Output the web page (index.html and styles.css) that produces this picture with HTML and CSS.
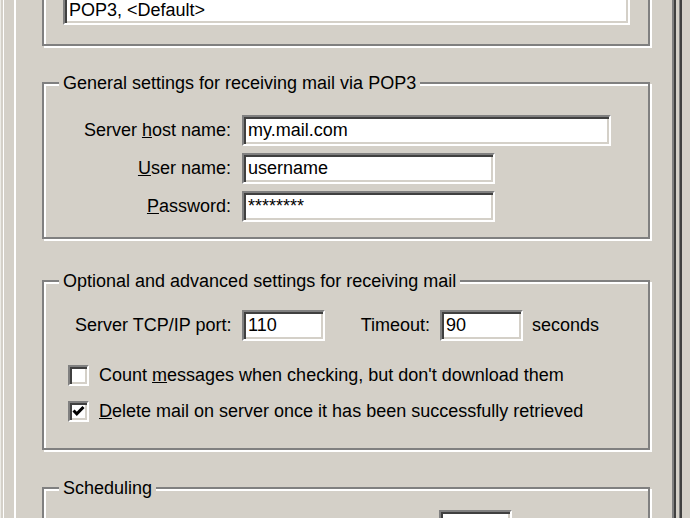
FILE: index.html
```html
<!DOCTYPE html>
<html lang="en">
<head>
    <meta charset="UTF-8">
    <title>Account Properties - Receiving</title>
    <link rel="stylesheet" href="styles.css">
</head>
<body>
    <div class="window">
        <div class="sheet">
            <div class="tab-page">

                <!-- Account list (top of group scrolled out of view) -->
                <div class="group group-first">
                    <div class="listbox">
                        <div class="list-item">POP3, &lt;Default&gt;</div>
                    </div>
                </div>

                <!-- General settings -->
                <div class="group group-general">
                    <div class="group-title">General settings for receiving mail via POP3</div>
                    <div class="form-grid">
                        <label class="form-label">Server <u>h</u>ost name:</label>
                        <input class="field field-wide" type="text" value="my.mail.com">
                        <label class="form-label"><u>U</u>ser name:</label>
                        <input class="field field-mid" type="text" value="username">
                        <label class="form-label"><u>P</u>assword:</label>
                        <input class="field field-mid" type="text" value="********">
                    </div>
                </div>

                <!-- Optional settings -->
                <div class="group group-optional">
                    <div class="group-title">Optional and advanced settings for receiving mail</div>
                    <div class="port-row">
                        <label class="port-label">Server TCP/IP port:</label>
                        <input class="field field-short" type="text" value="110">
                        <label class="timeout-label">Timeout:</label>
                        <input class="field field-short" type="text" value="90">
                        <span class="unit">seconds</span>
                    </div>
                    <div class="check-row check-first">
                        <span class="checkbox"></span>
                        <span>Count <u>m</u>essages when checking, but don't download them</span>
                    </div>
                    <div class="check-row">
                        <span class="checkbox">
                            <svg width="13" height="13" viewBox="0 0 13 13">
                                <path d="M1.5 5.5 L4.8 8.8 L11.5 2" fill="none" stroke="#000" stroke-width="3"/>
                            </svg>
                        </span>
                        <span><u>D</u>elete mail on server once it has been successfully retrieved</span>
                    </div>
                </div>

                <!-- Scheduling -->
                <div class="group group-schedule">
                    <div class="group-title">Scheduling</div>
                    <div class="schedule-row">
                        <label class="schedule-label">Check for new messages every</label>
                        <input class="field field-small" type="text" value="">
                        <span class="unit">minutes</span>
                    </div>
                </div>

            </div>
        </div>
    </div>
</body>
</html>
```
FILE: styles.css
```css
* {
    margin: 0;
    padding: 0;
    box-sizing: border-box;
}

:root {
    --face: #d4d0c8;
    --shadow: #808080;
    --dark: #404040;
    --light: #ffffff;
}

body {
    background-color: var(--face);
    color: #000;
    font-family: "Liberation Sans", Arial, sans-serif;
    font-size: 18px;
    height: 100vh;
    overflow: hidden;
}

/* Frames */
.window {
    display: flex;
    height: 100vh;
    border-left: 1px solid #ecebe6;
    padding: 0 8px 0 2px;
}

.sheet {
    flex: 1;
    display: flex;
    border-left: 1px solid var(--light);
    border-right: 2px solid var(--dark);
    box-shadow: inset -1px 0 0 var(--shadow);
    padding: 0 4px 0 10px;
}

.tab-page {
    flex: 1;
    border-left: 2px solid var(--light);
    border-right: 2px solid var(--dark);
    box-shadow: inset -2px 0 0 var(--shadow);
}

/* Group boxes */
.group {
    margin: 0 24px 0 26px;
    border: 2px solid var(--shadow);
    box-shadow: inset 2px 2px 0 var(--light), 2px 2px 0 var(--light);
    padding: 0 18px 0 19px;
}

.group-title {
    width: fit-content;
    margin: -11px 0 0 -4px;
    padding: 0 4px;
    background-color: var(--face);
    line-height: 20px;
    white-space: nowrap;
}

.group-first {
    margin-top: -20px;
    padding-top: 14px;
    padding-bottom: 19px;
}

.group-general {
    margin-top: 36px;
    padding-bottom: 15px;
}

.group-optional {
    margin-top: 41px;
    padding-bottom: 26px;
}

.group-schedule {
    margin-top: 37px;
    padding-bottom: 20px;
}

/* Sunken controls */
.listbox,
.field,
.checkbox {
    background-color: var(--light);
    border: 2px solid;
    border-color: var(--shadow) var(--light) var(--light) var(--shadow);
    box-shadow: inset 2px 2px 0 var(--dark), inset -2px -2px 0 var(--face);
}

.listbox {
    padding: 2px 4px 3px;
    line-height: 20px;
}

.field {
    height: 31px;
    padding: 0 4px;
    font: inherit;
    color: #000;
    outline: none;
}

.field-wide { width: 369px; }
.field-mid { width: 253px; }
.field-short { width: 83px; }
.field-small { width: 73px; }

/* General settings */
.form-grid {
    display: grid;
    grid-template-columns: 168px auto;
    column-gap: 11px;
    row-gap: 7px;
    align-items: center;
    justify-items: start;
    margin-top: 22px;
}

.form-label {
    justify-self: end;
    white-space: nowrap;
}

/* Optional settings */
.port-row,
.schedule-row {
    display: flex;
    align-items: center;
    white-space: nowrap;
}

.port-row {
    margin-top: 19px;
}

.port-label {
    width: 179px;
    padding-left: 12px;
}

.timeout-label {
    width: 115px;
    text-align: right;
    padding-right: 10px;
}

.unit {
    margin-left: 9px;
}

.check-row {
    display: flex;
    align-items: center;
    gap: 10px;
    height: 22px;
    margin: 14px 0 0 5px;
    white-space: nowrap;
}

.check-first {
    margin-top: 23px;
}

.checkbox {
    width: 21px;
    height: 21px;
    display: flex;
    align-items: center;
    justify-content: center;
}

/* Scheduling */
.schedule-row {
    margin-top: 12px;
}

.schedule-label {
    width: 376px;
    padding-left: 4px;
}
```
